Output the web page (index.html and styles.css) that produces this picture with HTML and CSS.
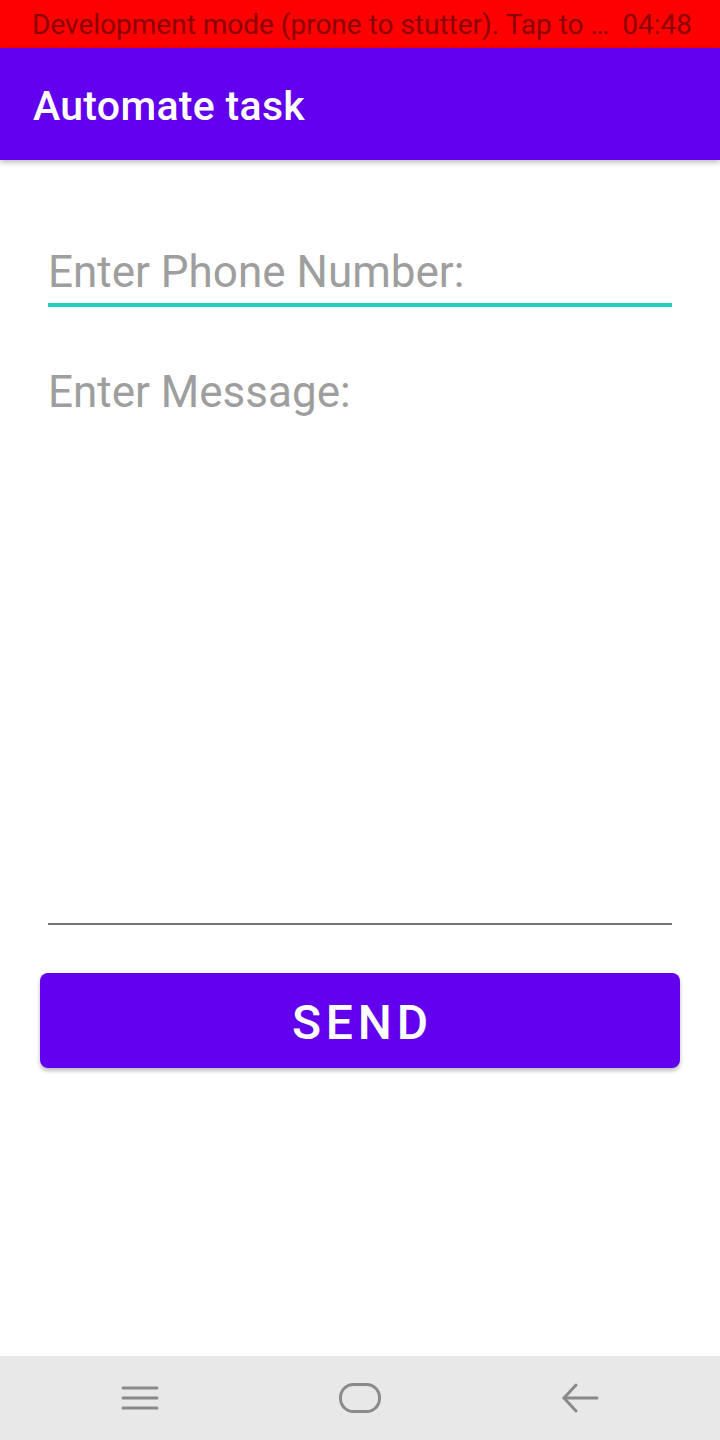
FILE: index.html
```html
<!DOCTYPE html>
<html lang="en">
<head>
  <meta charset="UTF-8" />
  <meta name="viewport" content="width=device-width, initial-scale=1" />
  <title>Automate task</title>
  <link rel="stylesheet" href="styles.css">
</head>
<body>

<div id="status-bar">
  <span class="status-text">Development mode (prone to stutter). Tap to …</span>
  <span class="status-time">04:48</span>
</div>

<div id="app-bar">
  <h1>Automate task</h1>
</div>

<div id="content">
  <input class="field phone-field" type="text" placeholder="Enter Phone Number:" />
  <textarea class="field message-field" placeholder="Enter Message:"></textarea>
  <button id="send-button">SEND</button>
</div>

<div id="nav-bar">
  <div class="nav-item">
    <svg width="38" height="26" viewBox="0 0 38 26">
      <g stroke="#8a8a8a" stroke-width="3" stroke-linecap="round">
        <line x1="2" y1="3" x2="36" y2="3" />
        <line x1="2" y1="13" x2="36" y2="13" />
        <line x1="2" y1="23" x2="36" y2="23" />
      </g>
    </svg>
  </div>
  <div class="nav-item">
    <svg width="42" height="30" viewBox="0 0 42 30">
      <rect x="1.5" y="1.5" width="39" height="27" rx="13" fill="none" stroke="#8a8a8a" stroke-width="3" />
    </svg>
  </div>
  <div class="nav-item">
    <svg width="38" height="30" viewBox="0 0 38 30">
      <g stroke="#8a8a8a" stroke-width="3" stroke-linecap="round" stroke-linejoin="round" fill="none">
        <line x1="3" y1="15" x2="36" y2="15" />
        <polyline points="15,2 3,15 15,28" />
      </g>
    </svg>
  </div>
</div>

</body>
</html>
```

FILE: styles.css
```css
body {
  font-family: Roboto, 'Noto Sans', sans-serif;
  margin: 0; padding: 0;
  width: 720px;
  height: 1440px;
  display: flex;
  flex-direction: column;
  background: #ffffff;
  overflow: hidden;
}
#status-bar {
  height: 48px;
  background-color: #ff0000;
  color: #8c0000;
  font-size: 28px;
  display: flex;
  align-items: center;
  justify-content: space-between;
  padding: 0 28px 0 32px;
  white-space: nowrap;
}
#app-bar {
  height: 112px;
  box-sizing: border-box;
  padding: 4px 0 0 33px;
  background-color: #6200ee;
  display: flex;
  align-items: center;
  box-shadow: 0 2px 6px rgba(0,0,0,0.3);
  position: relative;
  z-index: 1;
}
#app-bar h1 {
  margin: 0;
  color: #ffffff;
  font-size: 41px;
  font-weight: 500;
  letter-spacing: 0.3px;
}
#content {
  flex: 1;
  display: flex;
  flex-direction: column;
  padding: 86px 40px 0;
}
.field {
  font-family: Roboto, 'Noto Sans', sans-serif;
  font-size: 44px;
  line-height: 52px;
  color: #333;
  background: transparent;
  border: none;
  outline: none;
  margin: 0 8px;
  padding: 0;
  display: block;
}
.field::placeholder {
  color: #9e9e9e;
}
.phone-field {
  height: 52px;
  padding-bottom: 5px;
  border-bottom: 4px solid #22cdc4;
}
.message-field {
  height: 557px;
  margin-top: 59px;
  resize: none;
  border-bottom: 2px solid #757575;
}
#send-button {
  margin-top: 48px;
  height: 95px;
  border: none;
  border-radius: 8px;
  background-color: #6200ee;
  color: #ffffff;
  font-family: Roboto, 'Noto Sans', sans-serif;
  font-size: 48px;
  font-weight: 500;
  letter-spacing: 0.1em;
  padding: 4px 0 0 0.1em;
  box-shadow: 0 3px 4px rgba(0,0,0,0.25);
  cursor: pointer;
}
#nav-bar {
  height: 84px;
  background-color: #e8e8e8;
  display: flex;
  justify-content: center;
  align-items: center;
}
.nav-item {
  width: 220px;
  display: flex;
  justify-content: center;
  align-items: center;
}
.nav-item svg {
  display: block;
}
```
